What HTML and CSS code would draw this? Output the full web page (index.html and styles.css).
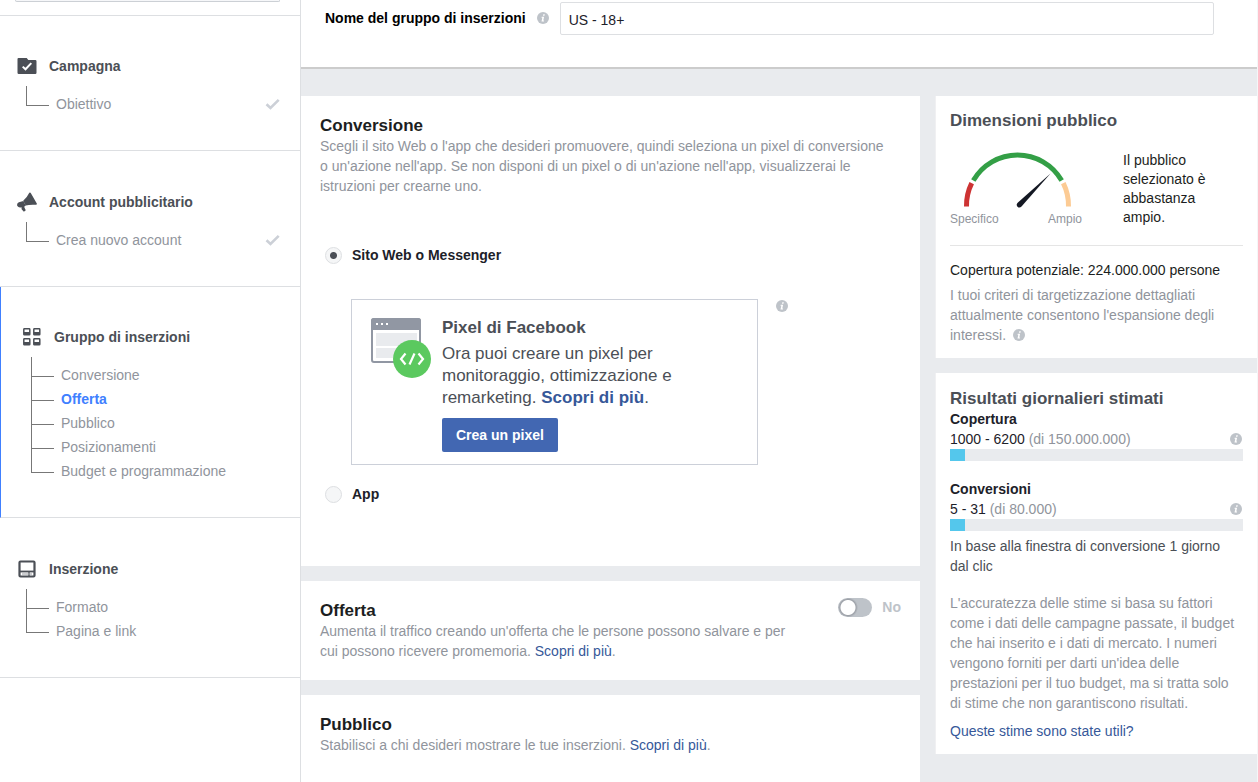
FILE: index.html
```html
<!DOCTYPE html>
<html lang="it">
<head>
<meta charset="utf-8">
<meta name="viewport" content="width=device-width, initial-scale=1">
<title>Gruppo di inserzioni</title>
<link rel="stylesheet" href="styles.css">
</head>
<body>
<svg class="sprite" aria-hidden="true">
  <symbol id="info" viewBox="0 0 12 12">
    <circle cx="6" cy="6" r="6" fill="#bec3c9"/>
    <path d="M6.3 2.2h1.5l-.3 1.5H6zM4.700 4.700h2.400l-.8 3.700h.8l-.2 1H4.500l.8-3.700h-.8z" fill="#fff"/>
  </symbol>
  <symbol id="check" viewBox="0 0 16 12">
    <path d="M2.500 6.200l4 3.800L14.700 1.800" fill="none" stroke="#ccd0d7" stroke-width="2.600"/>
  </symbol>
</svg>
<div class="app">
  <nav class="sidebar" aria-label="Passaggi">
    <div class="picker"><div class="picker-box"></div></div>
    <section class="step">
      <h2 class="step-title">
        <svg class="step-icon" viewBox="0 0 20 18"><path d="M1.500 1h8.200l1.600 2h7q1.200 0 1.200 1.200v11.600q0 1.200-1.200 1.200H1.700Q.5 17 .5 15.800V2q0-1 1-1z" fill="#4b4f56"/><path d="M5.700 9.600l2.800 2.700 5.800-6.200" fill="none" stroke="#fff" stroke-width="2"/></svg>
        Campagna
      </h2>
      <ul class="tree">
        <li class="leaf"><span class="branch"></span><a class="leaf-link" href="#">Obiettivo</a><svg class="check"><use href="#check"/></svg></li>
      </ul>
    </section>
    <section class="step roomy">
      <h2 class="step-title">
        <svg class="step-icon tall" viewBox="0 0 20 20"><path d="M12.300.8q.9-.9 1.600.4l5.900 10.300q.4 1.200-.8 1.300-6.400-.4-10.400.8L6.200 8.700q3.800-3 6.100-7.900z" fill="#4b4f56"/><path d="M6.400 9l2.400 4.700-4.200 1.500q-3 .9-4.200-1.200-1.100-2.400 1.500-3.700z" fill="#4b4f56"/><path d="M4.500 14.600l2.800-1.100.2 2.300 1.300 2.400-1.900 1.500-2.300-2.500z" fill="#4b4f56"/></svg>
        Account pubblicitario
      </h2>
      <ul class="tree">
        <li class="leaf"><span class="branch"></span><a class="leaf-link" href="#">Crea nuovo account</a><svg class="check"><use href="#check"/></svg></li>
      </ul>
    </section>
    <section class="step active">
      <h2 class="step-title">
        <svg class="step-icon" viewBox="0 0 20 18"><g fill="none" stroke="#4b4f56" stroke-width="1.500"><rect x="1.800" y=".8" width="6" height="6" rx=".6"/><rect x="11.800" y=".8" width="6" height="6" rx=".6"/><rect x="1.800" y="10.800" width="6" height="6" rx=".6"/><rect x="11.800" y="10.800" width="6" height="6" rx=".6"/></g><path d="M2 3.900h6v3H2zM12 3.900h6v3h-6zM2 13.900h6v3H2zM12 13.900h6v3h-6z" fill="#4b4f56"/></svg>
        Gruppo di inserzioni
      </h2>
      <ul class="tree">
        <li class="leaf"><span class="branch"></span><a class="leaf-link" href="#">Conversione</a></li>
        <li class="leaf"><span class="branch"></span><a class="leaf-link current" href="#">Offerta</a></li>
        <li class="leaf"><span class="branch"></span><a class="leaf-link" href="#">Pubblico</a></li>
        <li class="leaf"><span class="branch"></span><a class="leaf-link" href="#">Posizionamenti</a></li>
        <li class="leaf"><span class="branch"></span><a class="leaf-link" href="#">Budget e programmazione</a></li>
      </ul>
    </section>
    <section class="step roomy">
      <h2 class="step-title">
        <svg class="step-icon" viewBox="0 0 20 18"><rect x="2.500" y="1.500" width="15" height="15" rx="1" fill="none" stroke="#4b4f56" stroke-width="2.200"/><path d="M3 11.500h14" stroke="#4b4f56" stroke-width="1.800"/><path d="M12 12v4" stroke="#4b4f56" stroke-width="1.300"/><path d="M5 14h10" stroke="#9a9da3" stroke-width="1"/></svg>
        Inserzione
      </h2>
      <ul class="tree">
        <li class="leaf"><span class="branch"></span><a class="leaf-link" href="#">Formato</a></li>
        <li class="leaf"><span class="branch"></span><a class="leaf-link" href="#">Pagina e link</a></li>
      </ul>
    </section>
  </nav>
  <main class="main">
    <header class="name-bar">
      <label class="name-label" for="adset">Nome del gruppo di inserzioni</label>
      <svg class="info"><use href="#info"/></svg>
      <input class="name-input" id="adset" type="text" value="US - 18+">
    </header>
    <div class="columns">
      <div class="column">
        <section class="card conversion">
          <h2 class="card-title">Conversione</h2>
          <p class="muted">Scegli il sito Web o l'app che desideri promuovere, quindi seleziona un pixel di conversione o un'azione nell'app. Se non disponi di un pixel o di un'azione nell'app, visualizzerai le istruzioni per crearne uno.</p>
          <div class="choices">
            <label class="choice"><input class="radio" type="radio" name="target" checked>Sito Web o Messenger</label>
            <div class="pixel-row">
              <div class="pixel-box">
                <svg class="pixel-art" viewBox="0 0 62 62"><rect x="1" y="1" width="48" height="43" rx="2" fill="#fff" stroke="#9197a3" stroke-width="2"/><path d="M0 12V3q0-3 3-3h44q3 0 3 3v9z" fill="#9197a3"/><path d="M5 5h2v2H5zM10 5h2v2h-2zM15 5h2v2h-2z" fill="#fff"/><path d="M5 15h41v13H5zM5 30h41v10H5z" fill="#e9ebee"/><circle cx="41" cy="41" r="19" fill="#5bc95f"/><path d="M34.500 35.500L30 41l4.500 5.500M47.500 35.500L52 41l-4.500 5.500M43.500 35.500l-5 11" fill="none" stroke="#fff" stroke-width="2.200"/></svg>
                <div class="pixel-text">
                  <h3 class="pixel-title">Pixel di Facebook</h3>
                  <p class="pixel-copy">Ora puoi creare un pixel per monitoraggio, ottimizzazione e remarketing. <a class="link strong" href="#">Scopri di più</a>.</p>
                  <button class="primary" type="button">Crea un pixel</button>
                </div>
              </div>
              <svg class="info"><use href="#info"/></svg>
            </div>
            <label class="choice"><input class="radio" type="radio" name="target">App</label>
          </div>
        </section>
        <section class="card offer">
          <div class="offer-text">
            <h2 class="card-title">Offerta</h2>
            <p class="muted">Aumenta il traffico creando un'offerta che le persone possono salvare e per cui possono ricevere promemoria. <a class="link" href="#">Scopri di più</a>.</p>
          </div>
          <label class="toggle"><input class="switch" type="checkbox" role="switch">No</label>
        </section>
        <section class="card audience">
          <h2 class="card-title">Pubblico</h2>
          <p class="muted">Stabilisci a chi desideri mostrare le tue inserzioni. <a class="link" href="#">Scopri di più</a>.</p>
        </section>
      </div>
      <aside class="column rail">
        <section class="card side size">
          <h2 class="side-title">Dimensioni pubblico</h2>
          <div class="gauge-row">
            <div class="gauge">
              <svg class="dial" viewBox="0 0 132 58"><g fill="none" stroke-width="5"><path d="M16.500 55.500A51 51 0 0 1 21.700 32.200" stroke="#cd3333"/><path d="M23.300 29.500A51 51 0 0 1 111.700 29.500" stroke="#339f46"/><path d="M113.300 32.200A51 51 0 0 1 118.500 55.500" stroke="#fccb94"/></g><path d="M100.500 22.500L71.500 55.500q-2 2-4 .2-1.700-2 .2-3.900z" fill="#141823"/></svg>
              <div class="gauge-labels"><span>Specifico</span><span>Ampio</span></div>
            </div>
            <p class="gauge-text">Il pubblico selezionato è abbastanza ampio.</p>
          </div>
          <p class="reach">Copertura potenziale: 224.000.000 persone</p>
          <p class="muted">I tuoi criteri di targetizzazione dettagliati attualmente consentono l'espansione degli interessi. <svg class="info inline"><use href="#info"/></svg></p>
        </section>
        <section class="card side results">
          <h2 class="side-title">Risultati giornalieri stimati</h2>
          <div class="metric">
            <h3 class="metric-name">Copertura</h3>
            <div class="metric-value"><span>1000 - 6200 <span class="gray">(di 150.000.000)</span></span><svg class="info"><use href="#info"/></svg></div>
            <div class="bar"><div class="bar-fill" style="width:5%"></div></div>
          </div>
          <div class="metric">
            <h3 class="metric-name">Conversioni</h3>
            <div class="metric-value"><span>5 - 31 <span class="gray">(di 80.000)</span></span><svg class="info"><use href="#info"/></svg></div>
            <div class="bar"><div class="bar-fill" style="width:5%"></div></div>
          </div>
          <p class="window">In base alla finestra di conversione 1 giorno dal clic</p>
          <p class="muted">L'accuratezza delle stime si basa su fattori come i dati delle campagne passate, il budget che hai inserito e i dati di mercato. I numeri vengono forniti per darti un'idea delle prestazioni per il tuo budget, ma si tratta solo di stime che non garantiscono risultati.</p>
          <a class="link feedback" href="#">Queste stime sono state utili?</a>
        </section>
      </aside>
    </div>
  </main>
</div>
</body>
</html>
```
FILE: styles.css
```css
* { box-sizing: border-box; }
body {
  margin: 0;
  font: 14px/20px "Liberation Sans", Arial, sans-serif;
  color: #1d2129;
  background: #fff;
}
h2, h3, p, ul { margin: 0; padding: 0; }
ul { list-style: none; }
a { text-decoration: none; }
.sprite { display: none; }
.app {
  display: grid;
  grid-template-columns: 301px minmax(0, 1fr);
  height: 100vh;
  overflow: hidden;
}

/* Sidebar */
.sidebar { border-right: 1px solid #dddfe2; }
.picker {
  height: 16px;
  padding: 0 20px 0 15px;
  border-bottom: 1px solid #dddfe2;
}
.picker-box {
  height: 2px;
  background: #f6f7f9;
  border: solid #ccd0d5;
  border-width: 0 1px 1px;
  border-radius: 0 0 2px 2px;
}
.step {
  padding: 38px 20px 34px 17px;
  border-bottom: 1px solid #dddfe2;
}
.step.roomy { padding-top: 39px; }
.step.active {
  padding-left: 21px;
  border-left: 1px solid #4080ff;
}
.step-title {
  display: flex;
  align-items: center;
  gap: 12px;
  font-size: 14px;
  line-height: 24px;
  color: #4b4f56;
}
.step-icon { width: 20px; height: 18px; }
.step-icon.tall { height: 20px; }
.tree { padding: 14px 0 0 9px; }
.leaf {
  display: flex;
  align-items: center;
  height: 24px;
}
.branch {
  align-self: flex-start;
  width: 23px;
  height: 24px;
  margin: -10px 7px 0 0;
  border: solid #777;
  border-width: 0 0 1px 1px;
}
.leaf:first-child .branch { height: 20px; margin-top: -6px; }
.leaf-link { color: #90949c; }
.leaf-link.current { color: #4080ff; font-weight: bold; }
.check { width: 16px; height: 12px; margin-left: auto; }

/* Header */
.main {
  background: #e9ebee;
  border-right: 1px solid #f5f6f7;
}
.name-bar {
  display: flex;
  padding: 2px 43px 32px 24px;
  background: #fff;
  border-bottom: 2px solid #ccc;
}
.name-label { font-weight: bold; color: #000; line-height: 33px; }
.info { flex: none; width: 12px; height: 12px; }
.name-bar .info { margin: 10px 11px 0; }
.name-input {
  flex: 1;
  min-width: 0;
  height: 33px;
  padding: 3px 8px 0;
  border: 1px solid #dddfe2;
  border-radius: 2px;
  font: inherit;
  color: #1d2129;
}

/* Cards */
.columns {
  display: grid;
  grid-template-columns: minmax(0, 1fr) 322px;
  gap: 15px;
  align-items: start;
  padding-top: 27px;
}
.column { display: grid; gap: 15px; }
.card { padding: 20px 19px; background: #fff; }
.card-title { font-size: 17px; line-height: 20px; color: #1c1e21; }
.muted, .gray { color: #90949c; }
.link { color: #365899; }
.strong { font-weight: bold; }
.conversion { padding-bottom: 62px; }
.conversion .muted { padding-right: 7px; }
.choices { padding: 49px 0 0 5px; }
.choice {
  display: flex;
  align-items: center;
  gap: 10px;
  font-weight: bold;
}
.radio {
  appearance: none;
  width: 17px;
  height: 17px;
  margin: 0;
  border: 1px solid #dddfe2;
  border-radius: 50%;
  background: #f5f6f7;
}
.radio:checked { background: radial-gradient(circle, #4b4f56 3px, #f5f6f7 4px); }
.pixel-row {
  display: flex;
  gap: 18px;
  padding: 34px 0 19px 26px;
}
.pixel-row .info { margin-top: 1px; }
.pixel-box {
  display: flex;
  gap: 9px;
  width: 407px;
  padding: 17px 48px 12px 19px;
  border: 1px solid #ccd0d9;
}
.pixel-art { flex: none; width: 62px; height: 62px; margin-top: 1px; }
.pixel-title { font-size: 17px; line-height: 22px; color: #4b4f56; }
.pixel-copy {
  margin: 4px 0 9px;
  font-size: 17px;
  line-height: 22px;
  color: #4b4f56;
}
.primary {
  height: 34px;
  padding: 0 14px;
  border: 0;
  border-radius: 2px;
  background: #4267b2;
  color: #fff;
  font: bold 14px "Liberation Sans", Arial, sans-serif;
}
.offer {
  display: flex;
  justify-content: space-between;
  padding-bottom: 19px;
}
.offer-text { width: 484px; }
.toggle {
  display: flex;
  align-items: center;
  gap: 10px;
  height: 20px;
  margin-top: -4px;
  font-weight: bold;
  color: #bec3c9;
}
.switch {
  appearance: none;
  width: 34px;
  height: 19px;
  margin: 0;
  border-radius: 10px;
  background: radial-gradient(circle at 10px 50%, #fff 7px, #9da1a8 8px, #bec3c9 10px);
}
.audience { min-height: 200px; }

/* Right rail */
.side { padding: 15px 14px 13px; border-left: 1px solid #f0f0f2; }
.side-title { font-size: 17px; line-height: 20px; color: #4b4f56; }
.gauge-row {
  display: flex;
  gap: 41px;
  padding: 20px 0 16px;
  border-bottom: 1px solid #e5e5e5;
}
.gauge { width: 132px; }
.dial { display: block; width: 132px; height: 58px; }
.gauge-labels {
  display: flex;
  justify-content: space-between;
  font-size: 12px;
  color: #90949c;
}
.gauge-text {
  flex: 1;
  padding-right: 10px;
  line-height: 19px;
  color: #1c1e21;
}
.reach { margin: 14px 0 5px; color: #1c1e21; }
.info.inline { margin-left: 3px; vertical-align: -1px; }
.results { padding-top: 16px; }
.metric { padding-bottom: 18px; }
.metric-name { font-size: 14px; line-height: 20px; }
.metric-value {
  display: flex;
  justify-content: space-between;
  align-items: center;
}
.metric-value .info { margin-right: 1px; }
.bar { height: 12px; background: #e9ebee; }
.bar-fill { height: 12px; background: #54c7ec; }
.metric:nth-child(3) { padding-bottom: 5px; }
.window {
  margin-bottom: 17px;
  padding-right: 10px;
  color: #4b4f56;
}
.feedback { display: block; margin-top: 8px; }
```
